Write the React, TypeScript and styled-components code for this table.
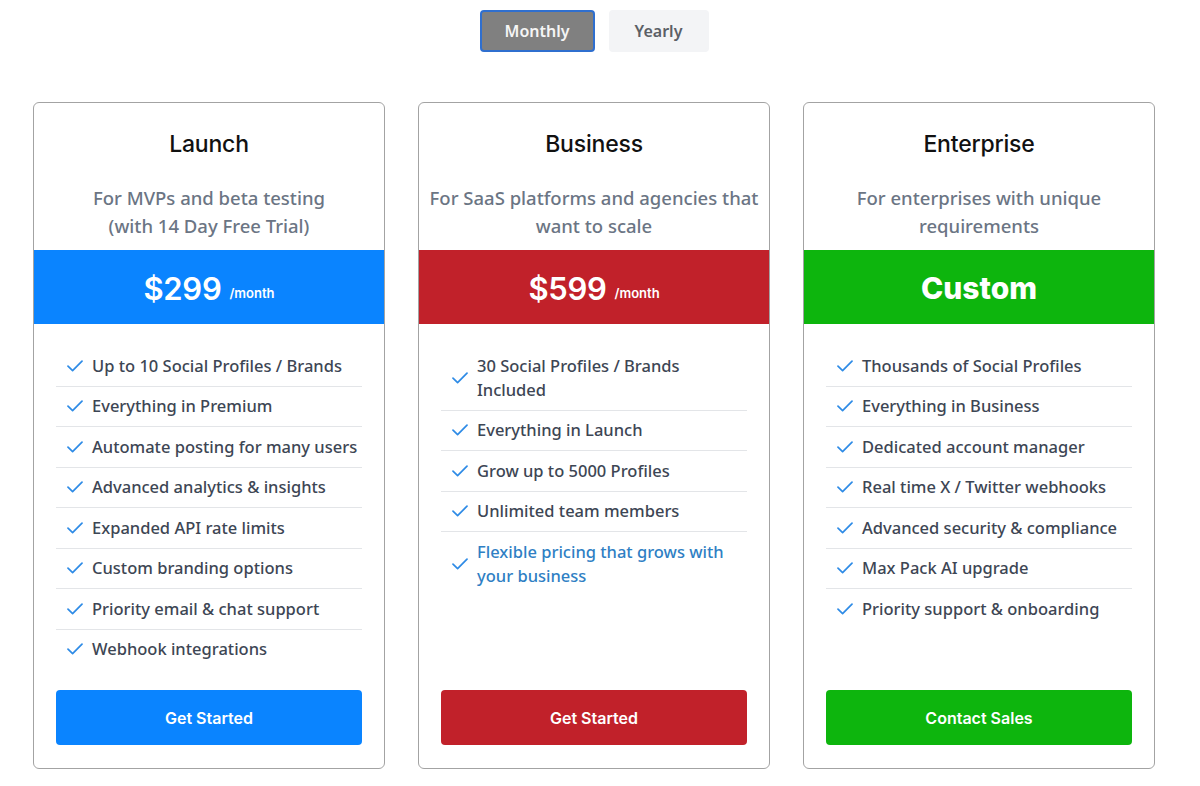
import React from "react";
import styled, { createGlobalStyle } from "styled-components";

const Global = createGlobalStyle`
  html, body { margin: 0; padding: 0; background: #ffffff; }
  body { font-family: "Noto Sans", "Open Sans", sans-serif; }
  * { box-sizing: border-box; }
`;

const Page = styled.div`
  width: 1188px;
  padding-top: 10px;
  display: flex;
  flex-direction: column;
  align-items: center;
`;

const Toggle = styled.div`
  display: flex;
  gap: 14px;
  align-items: center;
`;

const ToggleButton = styled.button<{ $active?: boolean }>`
  height: 42px;
  width: ${(p) => (p.$active ? "115px" : "100px")};
  border-radius: 4px;
  border: 2px solid ${(p) => (p.$active ? "#2f6fcf" : "#f3f4f6")};
  background: ${(p) => (p.$active ? "#808080" : "#f3f4f6")};
  color: ${(p) => (p.$active ? "#f5f5f5" : "#5b5f66")};
  font-family: "Noto Sans", sans-serif;
  font-size: 16px;
  font-weight: 600;
  cursor: pointer;
`;

const Cards = styled.div`
  margin-top: 50px;
  display: flex;
  gap: 33px;
  align-items: stretch;
`;

const Card = styled.div`
  width: 352px;
  border: 1px solid #a3a3a3;
  border-radius: 6px;
  background: #fff;
  display: flex;
  flex-direction: column;
  overflow: hidden;
  padding-bottom: 23px;
`;

const Header = styled.div`
  padding: 27px 10px 10px;
  text-align: center;
`;

const Title = styled.h2`
  margin: 0;
  font-family: "Inter", "Liberation Sans", sans-serif;
  font-weight: 500;
  font-size: 23px;
  line-height: 28px;
  color: #111;
  letter-spacing: -0.2px;
`;

const Subtitle = styled.p`
  margin: 26px 0 0;
  font-size: 18.5px;
  font-weight: 500;
  line-height: 28px;
  color: #6b7584;
`;

const Band = styled.div<{ $color: string }>`
  height: 74px;
  background: ${(p) => p.$color};
  display: flex;
  align-items: center;
  justify-content: center;
  gap: 8px;
  color: #fff;
`;

const Price = styled.span`
  font-family: "Inter", "Liberation Sans", sans-serif;
  font-size: 31px;
  font-weight: 600;
  letter-spacing: -0.3px;
  margin-top: 2px;
`;

const Per = styled.span`
  font-family: "Inter", "Liberation Sans", sans-serif;
  font-size: 13px;
  font-weight: 600;
  margin-top: 11px;
`;

const Custom = styled.span`
  font-family: "Inter", "Liberation Sans", sans-serif;
  font-size: 30px;
  font-weight: 800;
  margin-top: 2px;
`;

const List = styled.ul`
  list-style: none;
  margin: 0;
  padding: 22px 22px 0;
  flex: 1;
`;

const Item = styled.li<{ $highlight?: boolean }>`
  display: flex;
  align-items: center;
  gap: 9px;
  padding: 7.75px 0 7.75px 11px;
  border-bottom: 1px solid #e3e5e8;
  font-size: 16.5px;
  font-weight: 500;
  line-height: 24px;
  color: ${(p) => (p.$highlight ? "#2f7fc4" : "#3d4654")};
  &:last-child { border-bottom: none; }
`;

const FeatureText = styled.span`
  white-space: pre-line;
`;

const Check = styled.svg`
  flex: 0 0 16px;
  width: 16px;
  height: 12px;
`;

const Action = styled.button<{ $color: string }>`
  margin: 21px 22px 0;
  height: 55px;
  border: none;
  border-radius: 4px;
  background: ${(p) => p.$color};
  color: #fff;
  font-family: "Inter", "Liberation Sans", sans-serif;
  font-size: 16px;
  font-weight: 600;
  cursor: pointer;
`;

const CheckIcon = () => (
  <Check viewBox="0 0 16 12">
    <path d="M1 6.2 L5.6 10.6 L15 1.2" fill="none" stroke="#2e8be6" strokeWidth="1.7" strokeLinecap="round" strokeLinejoin="round" />
  </Check>
);

type Plan = {
  title: string;
  subtitle: string[];
  color: string;
  price?: string;
  features: { text: string; highlight?: boolean }[];
  cta: string;
};

const plans: Plan[] = [
  {
    title: "Launch",
    subtitle: ["For MVPs and beta testing", "(with 14 Day Free Trial)"],
    color: "#0a84ff",
    price: "$299",
    features: [
      { text: "Up to 10 Social Profiles / Brands" },
      { text: "Everything in Premium" },
      { text: "Automate posting for many users" },
      { text: "Advanced analytics & insights" },
      { text: "Expanded API rate limits" },
      { text: "Custom branding options" },
      { text: "Priority email & chat support" },
      { text: "Webhook integrations" },
    ],
    cta: "Get Started",
  },
  {
    title: "Business",
    subtitle: ["For SaaS platforms and agencies that", "want to scale"],
    color: "#c1212a",
    price: "$599",
    features: [
      { text: "30 Social Profiles / Brands\nIncluded" },
      { text: "Everything in Launch" },
      { text: "Grow up to 5000 Profiles" },
      { text: "Unlimited team members" },
      { text: "Flexible pricing that grows with\nyour business", highlight: true },
    ],
    cta: "Get Started",
  },
  {
    title: "Enterprise",
    subtitle: ["For enterprises with unique", "requirements"],
    color: "#0db50d",
    features: [
      { text: "Thousands of Social Profiles" },
      { text: "Everything in Business" },
      { text: "Dedicated account manager" },
      { text: "Real time X / Twitter webhooks" },
      { text: "Advanced security & compliance" },
      { text: "Max Pack AI upgrade" },
      { text: "Priority support & onboarding" },
    ],
    cta: "Contact Sales",
  },
];

export default function App() {
  return (
    <>
      <Global />
      <Page>
        <Toggle>
          <ToggleButton $active>Monthly</ToggleButton>
          <ToggleButton>Yearly</ToggleButton>
        </Toggle>
        <Cards>
          {plans.map((p) => (
            <Card key={p.title}>
              <Header>
                <Title>{p.title}</Title>
                <Subtitle>
                  {p.subtitle[0]}
                  <br />
                  {p.subtitle[1]}
                </Subtitle>
              </Header>
              <Band $color={p.color}>
                {p.price ? (
                  <>
                    <Price>{p.price}</Price>
                    <Per>/month</Per>
                  </>
                ) : (
                  <Custom>Custom</Custom>
                )}
              </Band>
              <List>
                {p.features.map((f) => (
                  <Item key={f.text} $highlight={f.highlight}>
                    <CheckIcon />
                    <FeatureText>{f.text}</FeatureText>
                  </Item>
                ))}
              </List>
              <Action $color={p.color}>{p.cta}</Action>
            </Card>
          ))}
        </Cards>
      </Page>
    </>
  );
}
